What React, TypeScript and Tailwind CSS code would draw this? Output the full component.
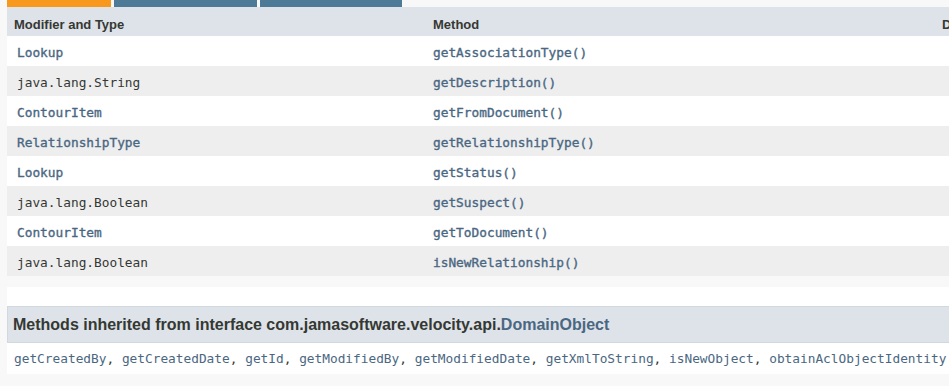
import React from "react";

type Row = { type: string; typeLink: boolean; method: string };

const rows: Row[] = [
  { type: "Lookup", typeLink: true, method: "getAssociationType()" },
  { type: "java.lang.String", typeLink: false, method: "getDescription()" },
  { type: "ContourItem", typeLink: true, method: "getFromDocument()" },
  { type: "RelationshipType", typeLink: true, method: "getRelationshipType()" },
  { type: "Lookup", typeLink: true, method: "getStatus()" },
  { type: "java.lang.Boolean", typeLink: false, method: "getSuspect()" },
  { type: "ContourItem", typeLink: true, method: "getToDocument()" },
  { type: "java.lang.Boolean", typeLink: false, method: "isNewRelationship()" },
];

const inherited = [
  "getCreatedBy",
  "getCreatedDate",
  "getId",
  "getModifiedBy",
  "getModifiedDate",
  "getXmlToString",
  "isNewObject",
  "obtainAclObjectIdentity",
];

export default function App() {
  return (
    <div className="w-[949px] h-[386px] overflow-hidden bg-[#f8f8f8] font-['Liberation_Sans',Arial,sans-serif] text-[#353833]">
      <div className="pl-[7px]">
        <div className="flex h-[7px] gap-[3px]">
          <div className="w-[104px] bg-[#f8981d]" />
          <div className="w-[143px] bg-[#4d7a97]" />
          <div className="w-[142px] bg-[#4d7a97]" />
        </div>
        <div className="w-[1300px]">
          <div className="grid grid-cols-[418px_510px_1fr] h-[29px] bg-[#dee3e9] text-[13px] font-bold">
            <div className="flex items-center pl-[7px] pt-[6px]">Modifier and Type</div>
            <div className="flex items-center pl-[8px] pt-[6px]">Method</div>
            <div className="flex items-center pl-[7px] pt-[6px]">Description</div>
          </div>
          {rows.map((r, i) => (
            <div
              key={i}
              className={
                "grid grid-cols-[418px_510px_1fr] h-[30px] font-['DejaVu_Sans_Mono',monospace] text-[12.8px] " +
                (i % 2 === 0 ? "bg-white" : "bg-[#eeeeef]")
              }
            >
              <div
                className={
                  "flex items-center pl-[10px] pt-[4px] " +
                  (r.typeLink ? "text-[#4a6782] [-webkit-text-stroke:0.35px_#4a6782]" : "text-[#353833]")
                }
              >
                {r.type}
              </div>
              <div className="flex items-center pl-[8px] pt-[4px] text-[#4a6782] [-webkit-text-stroke:0.35px_#4a6782]">
                {r.method}
              </div>
              <div />
            </div>
          ))}
        </div>
      </div>
      <div className="h-[11px]" />
      <div className="ml-[7px] bg-white pt-[19px]">
        <div className="h-[37px] w-[1300px] flex items-center border border-[#d0d9e0] bg-[#dee3e9] pl-[5px] text-[16px] font-bold text-[#353833] whitespace-nowrap">
          Methods inherited from interface com.jamasoftware.velocity.api.
          <span className="text-[#4a6782]">DomainObject</span>
        </div>
        <div className="h-[31px] flex items-center pl-[7px] font-['DejaVu_Sans_Mono',monospace] text-[12.8px] text-[#4a6782] whitespace-nowrap">
          {inherited.map((m, i) => (
            <React.Fragment key={m}>
              <span>{m}</span>
              {i < inherited.length - 1 && <span className="text-[#353833] whitespace-pre">, </span>}
            </React.Fragment>
          ))}
        </div>
      </div>
    </div>
  );
}
